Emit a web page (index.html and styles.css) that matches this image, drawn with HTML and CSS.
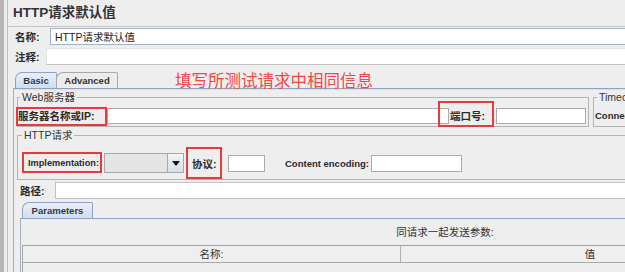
FILE: index.html
```html
<!DOCTYPE html>
<html lang="zh-CN">

<head>
    <meta charset="UTF-8">
    <meta name="viewport" content="width=device-width, initial-scale=1.0">
    <title>HTTP请求默认值</title>
    <link rel="stylesheet" href="styles.css">
</head>

<body>
    <div class="window">
        <div class="grip"></div>
        <div class="main">
            <div class="title">HTTP请求默认值</div>

            <div class="field-row name-row">
                <label class="label name-label">名称:</label>
                <input class="text name-input" type="text" value="HTTP请求默认值">
            </div>
            <div class="field-row comment-row">
                <label class="label comment-label">注释:</label>
                <input class="text comment-input" type="text">
            </div>

            <!-- Basic / Advanced tabs -->
            <div class="tabs">
                <div class="tab-strip">
                    <span class="tab tab-basic selected">Basic</span>
                    <span class="tab tab-advanced">Advanced</span>
                </div>
                <div class="tab-panel">
                    <div class="server-row">
                        <fieldset class="group web-group">
                            <legend>Web服务器</legend>
                            <div class="row">
                                <label class="label server-label">服务器名称或IP:</label>
                                <input class="text server-input" type="text">
                                <label class="label port-label">端口号:</label>
                                <input class="text port-input" type="text">
                            </div>
                        </fieldset>
                        <fieldset class="group timeout-group">
                            <legend>Timeouts (milliseconds)</legend>
                            <div class="row">
                                <label class="label en">Connect:</label>
                                <input class="text timeout-input" type="text">
                            </div>
                        </fieldset>
                    </div>

                    <fieldset class="group http-group">
                        <legend>HTTP请求</legend>
                        <div class="row http-row">
                            <label class="label en impl-label">Implementation:</label>
                            <div class="combo">
                                <span class="combo-value"></span>
                                <span class="combo-button"><span class="arrow"></span></span>
                            </div>
                            <label class="label proto-label">协议:</label>
                            <input class="text proto-input" type="text">
                            <label class="label en enc-label">Content encoding:</label>
                            <input class="text enc-input" type="text">
                        </div>
                    </fieldset>

                    <div class="field-row path-row">
                        <label class="label path-label">路径:</label>
                        <input class="text path-input" type="text">
                    </div>

                    <!-- Parameters table -->
                    <div class="params">
                        <div class="tab-strip params-strip">
                            <span class="tab tab-params selected">Parameters</span>
                        </div>
                        <div class="params-panel">
                            <div class="caption">同请求一起发送参数:</div>
                            <div class="table">
                                <div class="thead">
                                    <span class="th th-name">名称:</span>
                                    <span class="th th-value">值</span>
                                    <span class="th th-encode">编码?</span>
                                </div>
                            </div>
                        </div>
                    </div>
                </div>
            </div>
        </div>

        <!-- red annotations drawn over the form -->
        <div class="note">填写所测试请求中相同信息</div>
        <div class="mark mark-server"></div>
        <div class="mark mark-port"></div>
        <div class="mark mark-impl"></div>
        <div class="mark mark-proto"></div>
    </div>
</body>

</html>
```

FILE: styles.css
```css
/* Base */
* {
    box-sizing: border-box;
}

html,
body {
    margin: 0;
    height: 100%;
    overflow: hidden;
}

body {
    background-color: #eeeeee;
    font-family: "Liberation Sans", "Noto Sans CJK SC", sans-serif;
    font-size: 10.5px;
    color: #333;
}

/* Window frame */
.window {
    position: relative;
    display: flex;
    width: 880px;
    height: 272px;
    overflow: hidden;
}

.grip {
    flex: none;
    width: 4px;
    background-color: #e2e2e2;
    background-image: radial-gradient(#b4b4b4 0.7px, transparent 0.9px);
    background-size: 2px 2px;
}

.main {
    flex: none;
    width: 870px;
    margin-left: 3px;
    border-left: 1px solid #bdbdbd;
}

/* Title */
.title {
    height: 27px;
    padding-left: 5px;
    line-height: 26px;
    font-size: 13.5px;
    font-weight: bold;
    color: #333;
    border-bottom: 1px solid #c4c4c4;
}

/* Generic inputs and labels */
.label {
    flex: none;
    font-weight: bold;
    color: #2b2b2b;
    white-space: nowrap;
}

.label.en {
    font-size: 9.5px;
}

.text {
    display: block;
    margin: 0;
    padding: 0 2px;
    height: 16px;
    font: inherit;
    font-weight: normal;
    color: #222;
    background-color: #fff;
    border: 1px solid #ababab;
    outline: none;
}

.field-row {
    display: flex;
    align-items: center;
    height: 17px;
}

.field-row .text {
    flex: 1;
    height: 17px;
}

/* Name / comment rows */
.name-row {
    margin-top: 1px;
    padding-left: 7px;
}

.name-label {
    width: 35px;
}

.name-input {
    padding-left: 4px;
    border-color: #a2b2c7;
    border-right: none;
}

.comment-row {
    margin-top: 3px;
    padding-left: 7px;
}

.comment-label {
    width: 31px;
}

.comment-input {
    border-color: #e3e3e3;
    border-bottom-color: #c4c4c4;
    border-right: none;
}

/* Tabs */
.tabs {
    width: 856px;
    margin: 7px 0 0 5px;
}

.tab-strip {
    display: flex;
    height: 16px;
    padding-left: 2px;
}

.tab {
    height: 16px;
    line-height: 15px;
    text-align: center;
    font-size: 9.5px;
    font-weight: bold;
    color: #333;
    background-color: #ececec;
    border: 1px solid #a9a9a9;
    border-bottom: none;
    border-radius: 7px 2px 0 0;
}

.tab.selected {
    color: #2c3a4e;
    background: linear-gradient(#e9eff7, #d2deee);
    border-color: #8ea3c4;
}

.tab-basic {
    width: 42px;
}

.tab-advanced {
    width: 62px;
    margin-left: -1px;
}

.tab-panel {
    height: 184px;
    border-top: 1px solid #8ea3c4;
    border-left: 1px solid #a3b1c6;
    box-shadow: inset 0 1px #d8e1ee;
}

/* Group boxes */
.server-row {
    display: flex;
    margin-top: 3px;
    padding-left: 3px;
}

.group {
    margin: 0;
    min-width: 0;
    padding: 5px 2px 2px 0;
    border: 1px solid #b3b3b3;
}

.group legend {
    margin-left: 2px;
    padding: 0 2px;
    line-height: 10px;
    font-size: 10.5px;
    color: #333;
    white-space: nowrap;
}

.row {
    display: flex;
    align-items: center;
    height: 17px;
}

.web-group {
    flex: none;
    width: 572px;
}

.server-label {
    width: 89px;
}

.server-input {
    flex: 1;
}

.port-label {
    width: 47px;
    padding-left: 1px;
}

.port-input {
    flex: none;
    width: 90px;
}

.timeout-group {
    flex: 1;
    margin-left: 4px;
    padding-left: 1px;
}

.timeout-input {
    width: 80px;
    margin-left: 4px;
}

/* HTTP request group */
.http-group {
    margin: 3px 0 0 3px;
    padding: 13px 0 6px 1px;
}

.http-group legend {
    margin-left: 3px;
}

.http-row {
    height: 20px;
    padding-left: 9px;
}

.impl-label {
    width: 76px;
    font-size: 9.2px !important;
}

.combo {
    flex: none;
    display: flex;
    width: 80px;
    height: 20px;
    background-color: #e4e4e4;
    border: 1px solid #a9a9a9;
}

.combo-value {
    flex: 1;
}

.combo-button {
    display: flex;
    align-items: center;
    justify-content: center;
    width: 16px;
    background: linear-gradient(#f3f6fa, #d5dde8);
    border-left: 1px solid #a9a9a9;
}

.arrow {
    width: 0;
    height: 0;
    border-left: 4px solid transparent;
    border-right: 4px solid transparent;
    border-top: 5px solid #111;
}

.proto-label {
    width: 36px;
    margin-left: 8px;
}

.proto-input {
    flex: none;
    width: 37px;
    height: 17px;
}

.enc-label {
    width: 86px;
    margin-left: 20px;
}

.enc-input {
    flex: none;
    width: 91px;
    height: 17px;
}

/* Path row */
.path-row {
    margin-top: 2px;
}

.path-label {
    width: 41px;
    padding-left: 6px;
}

.path-input {
    border-color: #c2c2c2;
    border-right: none;
}

/* Parameters */
.params {
    margin: 3px 0 0 6px;
}

.params-strip {
    padding-left: 2px;
}

.tab-params {
    width: 71px;
}

.params-panel {
    height: 54px;
    border-top: 1px solid #8ea3c4;
    border-left: 1px solid #a3b1c6;
}

.caption {
    height: 26px;
    line-height: 26px;
    text-align: center;
    color: #333;
}

.table {
    height: 27px;
    margin-left: 1px;
    border-left: 1px solid #a8a8a8;
}

.thead {
    display: flex;
    height: 18px;
    background-color: #efefef;
    border-top: 1px solid #a0a0a0;
    border-bottom: 1px solid #a8a8a8;
}

.th {
    line-height: 16px;
    text-align: center;
    color: #333;
    border-right: 1px solid #b0b0b0;
}

.th-name {
    width: 378px;
}

.th-value {
    width: 379px;
}

.th-encode {
    flex: 1;
}

/* Red annotations */
.note {
    position: absolute;
    left: 175px;
    top: 69px;
    line-height: 22px;
    font-family: "Noto Sans CJK SC", sans-serif;
    font-size: 16.5px;
    color: #f24848;
    white-space: nowrap;
}

.mark {
    position: absolute;
    border: 2px solid #e63b3b;
}

.mark-server {
    left: 16px;
    top: 107px;
    width: 91px;
    height: 19px;
}

.mark-port {
    left: 438px;
    top: 101px;
    width: 56px;
    height: 26px;
}

.mark-impl {
    left: 22px;
    top: 152px;
    width: 80px;
    height: 21px;
}

.mark-proto {
    left: 186px;
    top: 147px;
    width: 36px;
    height: 32px;
}
```
